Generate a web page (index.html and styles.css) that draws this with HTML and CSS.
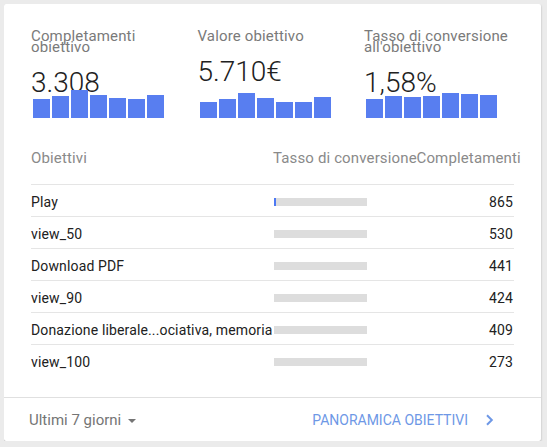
FILE: index.html
```html
<!DOCTYPE html>
<html lang="it">
<head>
    <meta charset="UTF-8">
    <meta name="viewport" content="width=device-width, initial-scale=1.0">
    <title>Obiettivi</title>
    <link rel="stylesheet" href="styles.css">
</head>
<body>
    <div class="card">
        <div class="card-body">
            <!-- KPI summary -->
            <div class="kpis">
                <div class="kpi">
                    <div class="kpi-head">
                        <div class="kpi-title">Completamenti obiettivo</div>
                        <div class="kpi-value">3.308</div>
                    </div>
                    <div class="kpi-bars">
                        <span style="height:19px"></span>
                        <span style="height:22px"></span>
                        <span style="height:28px"></span>
                        <span style="height:23px"></span>
                        <span style="height:20px"></span>
                        <span style="height:19px"></span>
                        <span style="height:23px"></span>
                    </div>
                </div>
                <div class="kpi">
                    <div class="kpi-head">
                        <div class="kpi-title">Valore obiettivo</div>
                        <div class="kpi-value">5.710€</div>
                    </div>
                    <div class="kpi-bars">
                        <span style="height:16px"></span>
                        <span style="height:19px"></span>
                        <span style="height:25px"></span>
                        <span style="height:20px"></span>
                        <span style="height:16px"></span>
                        <span style="height:16px"></span>
                        <span style="height:21px"></span>
                    </div>
                </div>
                <div class="kpi">
                    <div class="kpi-head">
                        <div class="kpi-title">Tasso di conversione all'obiettivo</div>
                        <div class="kpi-value">1,58%</div>
                    </div>
                    <div class="kpi-bars">
                        <span style="height:19px"></span>
                        <span style="height:22px"></span>
                        <span style="height:21px"></span>
                        <span style="height:22px"></span>
                        <span style="height:25px"></span>
                        <span style="height:24px"></span>
                        <span style="height:23px"></span>
                    </div>
                </div>
            </div>

            <!-- Goals table -->
            <div class="goals">
                <div class="goals-row goals-header">
                    <div>Obiettivi</div>
                    <div>Tasso di conversione</div>
                    <div>Completamenti</div>
                </div>
                <div class="goals-row">
                    <div class="goal-name">Play</div>
                    <div class="goal-rate"><span class="rate-bar"><span class="rate-fill" style="width:2px"></span></span></div>
                    <div class="goal-count">865</div>
                </div>
                <div class="goals-row">
                    <div class="goal-name">view_50</div>
                    <div class="goal-rate"><span class="rate-bar"></span></div>
                    <div class="goal-count">530</div>
                </div>
                <div class="goals-row">
                    <div class="goal-name">Download PDF</div>
                    <div class="goal-rate"><span class="rate-bar"></span></div>
                    <div class="goal-count">441</div>
                </div>
                <div class="goals-row">
                    <div class="goal-name">view_90</div>
                    <div class="goal-rate"><span class="rate-bar"></span></div>
                    <div class="goal-count">424</div>
                </div>
                <div class="goals-row">
                    <div class="goal-name">Donazione liberale...ociativa, memoria</div>
                    <div class="goal-rate"><span class="rate-bar"></span></div>
                    <div class="goal-count">409</div>
                </div>
                <div class="goals-row">
                    <div class="goal-name">view_100</div>
                    <div class="goal-rate"><span class="rate-bar"></span></div>
                    <div class="goal-count">273</div>
                </div>
            </div>
        </div>

        <!-- Footer -->
        <div class="card-footer">
            <div class="range">Ultimi 7 giorni <span class="caret"></span></div>
            <a class="footer-link">PANORAMICA OBIETTIVI
                <svg width="9" height="12" viewBox="0 0 9 12"><path d="M2 1.2 L6.8 6 L2 10.8" fill="none" stroke="currentColor" stroke-width="2"/></svg>
            </a>
        </div>
    </div>
</body>
</html>
```

FILE: styles.css
```css
/* Reset */
* {
    margin: 0;
    padding: 0;
    box-sizing: border-box;
}

body {
    margin: 4px;
    font-family: Roboto, "Liberation Sans", sans-serif;
    background-color: #ebebeb;
    color: #212121;
}

/* Card */
.card {
    width: 537px;
    height: 437px;
    background-color: #fff;
    border-radius: 2px;
    box-shadow: 0 1px 2px rgba(0, 0, 0, 0.3);
    display: flex;
    flex-direction: column;
}

.card-body {
    padding: 27px 27px 0;
}

/* KPI summary */
.kpis {
    display: grid;
    grid-template-columns: repeat(3, 150px);
    column-gap: 16.5px;
}

.kpi {
    display: grid;
    height: 87px;
}

.kpi > * {
    grid-area: 1 / 1;
}

.kpi-head {
    align-self: start;
}

.kpi-title {
    font-size: 15px;
    line-height: 11px;
    letter-spacing: 0.15px;
    color: #7a7a7a;
}

.kpi-value {
    margin-top: 16px;
    font-size: 28px;
    font-weight: 300;
    line-height: 28px;
    color: #212121;
}

.kpi-bars {
    align-self: end;
    display: flex;
    align-items: flex-end;
    gap: 2px;
    width: 131px;
    margin-left: 2px;
}

.kpi-bars span {
    flex: 1;
    background-color: #587ef0;
}

/* Goals table */
.goals {
    margin-top: 30px;
}

.goals-row {
    display: grid;
    grid-template-columns: 242px 143.5px 1fr;
    align-items: center;
    padding: 7px 0 4px;
    line-height: 20px;
    font-size: 14px;
    letter-spacing: 0.14px;
    border-bottom: 1px solid #e5e5e5;
    white-space: nowrap;
}

.goals-row:last-child {
    border-bottom: none;
}

.goals-header {
    padding: 0 0 16px;
    font-size: 15px;
    color: #8a8a8a;
}

.goal-rate {
    display: flex;
    align-items: center;
}

.rate-bar {
    display: block;
    width: 93px;
    height: 8px;
    margin-left: 1px;
    background-color: #dddddd;
}

.rate-fill {
    display: block;
    height: 100%;
    background-color: #4d79f3;
}

.goal-count {
    text-align: right;
    padding-right: 1px;
}

/* Footer */
.card-footer {
    margin-top: auto;
    height: 44px;
    border-top: 1px solid #e0e0e0;
    display: flex;
    align-items: center;
    justify-content: space-between;
    padding: 0 47px 0 25px;
    line-height: 20px;
}

.range {
    font-size: 15px;
    color: #757575;
    display: flex;
    align-items: center;
}

.caret {
    width: 0;
    height: 0;
    margin: 2px 0 0 7px;
    border-left: 4.5px solid transparent;
    border-right: 4.5px solid transparent;
    border-top: 4.5px solid #757575;
}

.footer-link {
    font-size: 14px;
    color: #6e98e6;
    display: flex;
    align-items: center;
    gap: 17px;
    cursor: pointer;
}
```
